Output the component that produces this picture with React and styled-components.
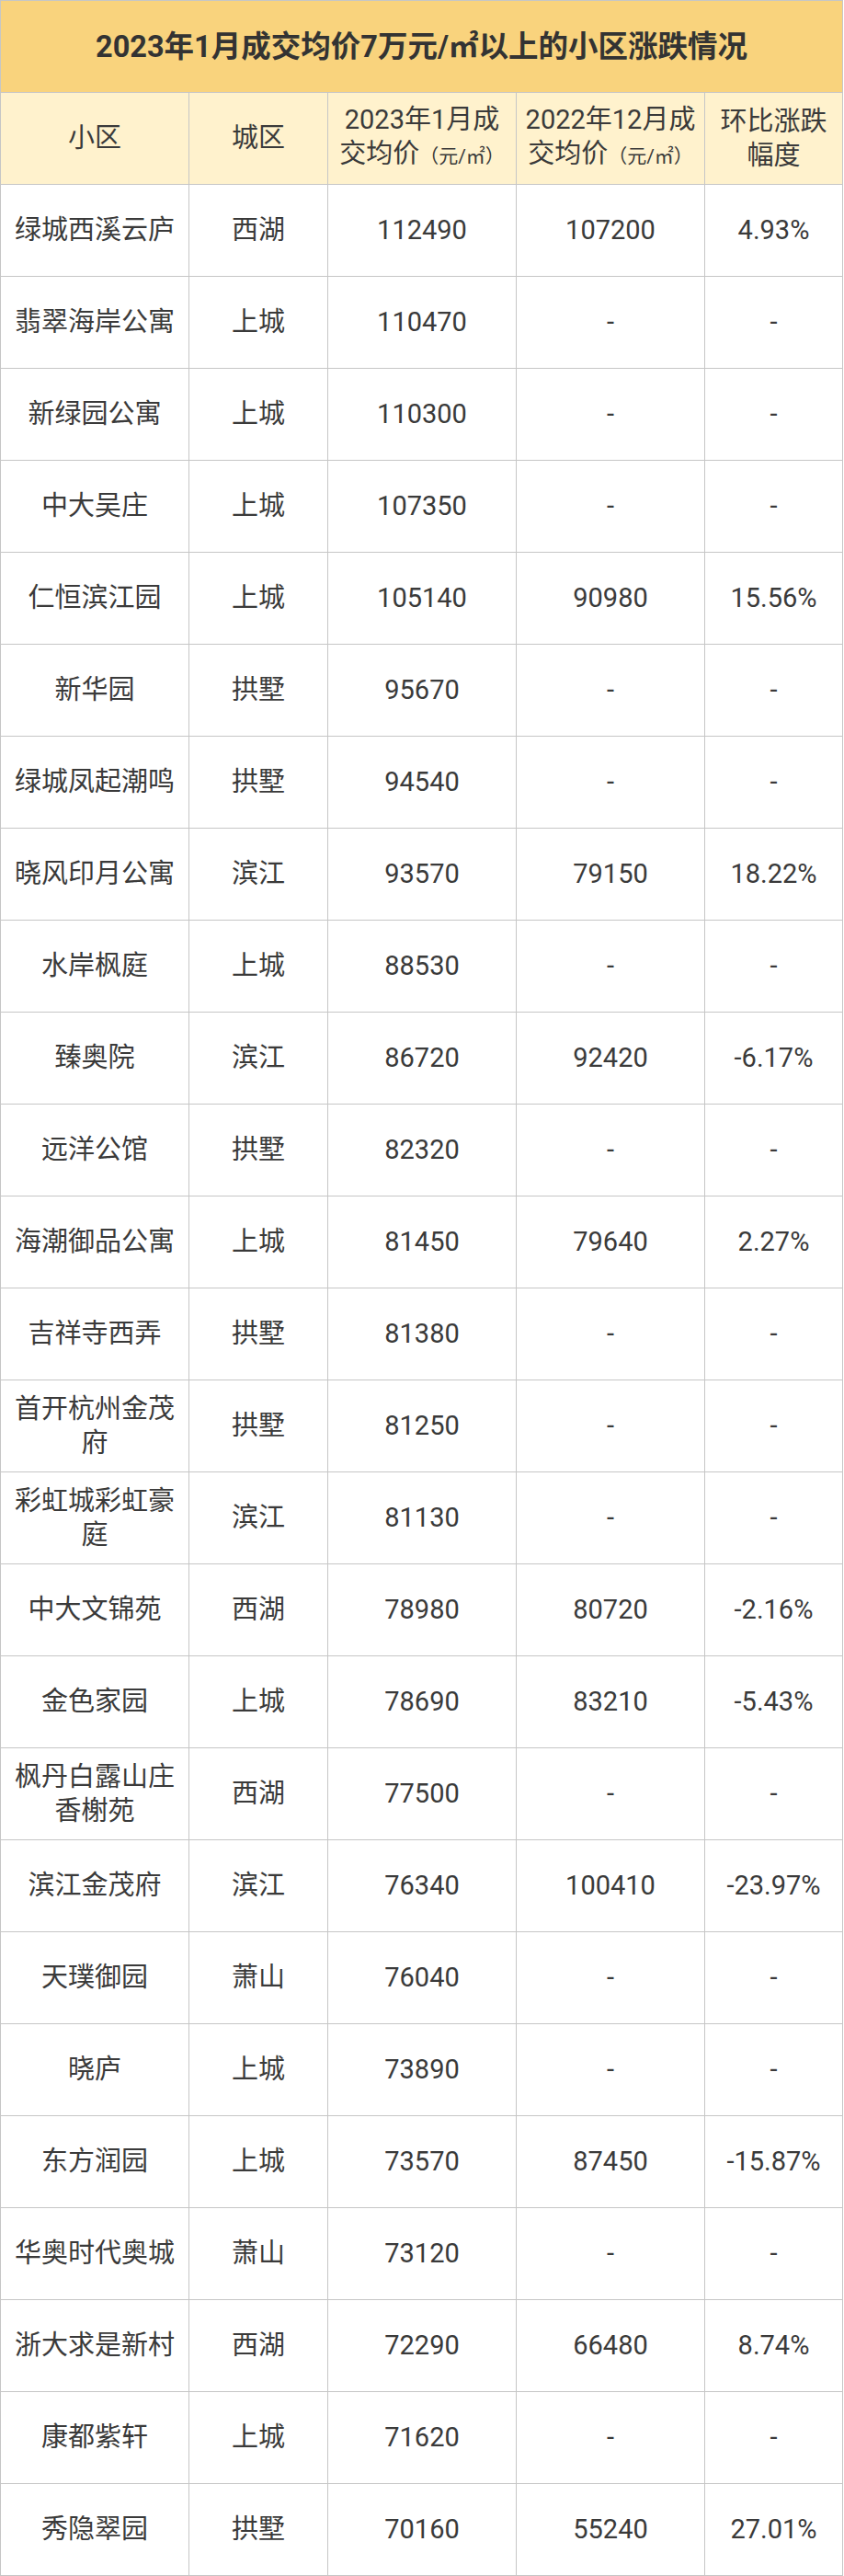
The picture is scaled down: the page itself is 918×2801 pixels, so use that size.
import React from "react";
import styled, { createGlobalStyle } from "styled-components";

const GlobalStyle = createGlobalStyle`
  html, body {
    margin: 0;
    padding: 0;
    background: #ffffff;
  }
  body {
    font-family: Roboto, "Liberation Sans", "Noto Sans CJK SC", sans-serif;
    color: #3a3a3a;
  }
  * { box-sizing: border-box; }
`;

const Table = styled.div`
  display: grid;
  grid-template-columns: 205px 151px 205px 205px 150px;
  width: 917px;
  border-top: 1px solid #c6c6c6;
  border-left: 1px solid #c6c6c6;
  font-family: Roboto, "Liberation Sans", "Noto Sans CJK SC", sans-serif;
`;

const Title = styled.div`
  grid-column: 1 / -1;
  height: 100px;
  display: flex;
  align-items: center;
  justify-content: center;
  background: #f9d37d;
  border-right: 1px solid #c6c6c6;
  border-bottom: 1px solid #c6c6c6;
  font-size: 32.5px;
  line-height: 40px;
  font-weight: 700;
  color: #333333;
`;

const Cell = styled.div`
  height: 100px;
  display: flex;
  flex-direction: column;
  align-items: center;
  justify-content: center;
  text-align: center;
  padding: 0 6px;
  border-right: 1px solid #c6c6c6;
  border-bottom: 1px solid #c6c6c6;
  background: ${(p) => (p.$head ? "#fff2cd" : "#ffffff")};
  font-size: 29px;
  line-height: 37px;
  color: #3a3a3a;
  word-break: break-all;
`;

const Line = styled.div`
  white-space: nowrap;
`;

const Unit = styled.span`
  font-size: 21px;
`;

const rows = [
  ["绿城西溪云庐", "西湖", "112490", "107200", "4.93%"],
  ["翡翠海岸公寓", "上城", "110470", "-", "-"],
  ["新绿园公寓", "上城", "110300", "-", "-"],
  ["中大吴庄", "上城", "107350", "-", "-"],
  ["仁恒滨江园", "上城", "105140", "90980", "15.56%"],
  ["新华园", "拱墅", "95670", "-", "-"],
  ["绿城凤起潮鸣", "拱墅", "94540", "-", "-"],
  ["晓风印月公寓", "滨江", "93570", "79150", "18.22%"],
  ["水岸枫庭", "上城", "88530", "-", "-"],
  ["臻奥院", "滨江", "86720", "92420", "-6.17%"],
  ["远洋公馆", "拱墅", "82320", "-", "-"],
  ["海潮御品公寓", "上城", "81450", "79640", "2.27%"],
  ["吉祥寺西弄", "拱墅", "81380", "-", "-"],
  ["首开杭州金茂府", "拱墅", "81250", "-", "-"],
  ["彩虹城彩虹豪庭", "滨江", "81130", "-", "-"],
  ["中大文锦苑", "西湖", "78980", "80720", "-2.16%"],
  ["金色家园", "上城", "78690", "83210", "-5.43%"],
  ["枫丹白露山庄香榭苑", "西湖", "77500", "-", "-"],
  ["滨江金茂府", "滨江", "76340", "100410", "-23.97%"],
  ["天璞御园", "萧山", "76040", "-", "-"],
  ["晓庐", "上城", "73890", "-", "-"],
  ["东方润园", "上城", "73570", "87450", "-15.87%"],
  ["华奥时代奥城", "萧山", "73120", "-", "-"],
  ["浙大求是新村", "西湖", "72290", "66480", "8.74%"],
  ["康都紫轩", "上城", "71620", "-", "-"],
  ["秀隐翠园", "拱墅", "70160", "55240", "27.01%"],
];

export default function App() {
  return (
    <>
      <GlobalStyle />
      <Table>
        <Title>2023年1月成交均价7万元/㎡以上的小区涨跌情况</Title>
        <Cell $head>小区</Cell>
        <Cell $head>城区</Cell>
        <Cell $head>
          <Line>2023年1月成</Line>
          <Line>
            交均价<Unit>（元/㎡）</Unit>
          </Line>
        </Cell>
        <Cell $head>
          <Line>2022年12月成</Line>
          <Line>
            交均价<Unit>（元/㎡）</Unit>
          </Line>
        </Cell>
        <Cell $head>
          <Line>环比涨跌</Line>
          <Line>幅度</Line>
        </Cell>
        {rows.map((r, i) =>
          r.map((v, j) => <Cell key={`${i}-${j}`}>{v}</Cell>)
        )}
      </Table>
    </>
  );
}
